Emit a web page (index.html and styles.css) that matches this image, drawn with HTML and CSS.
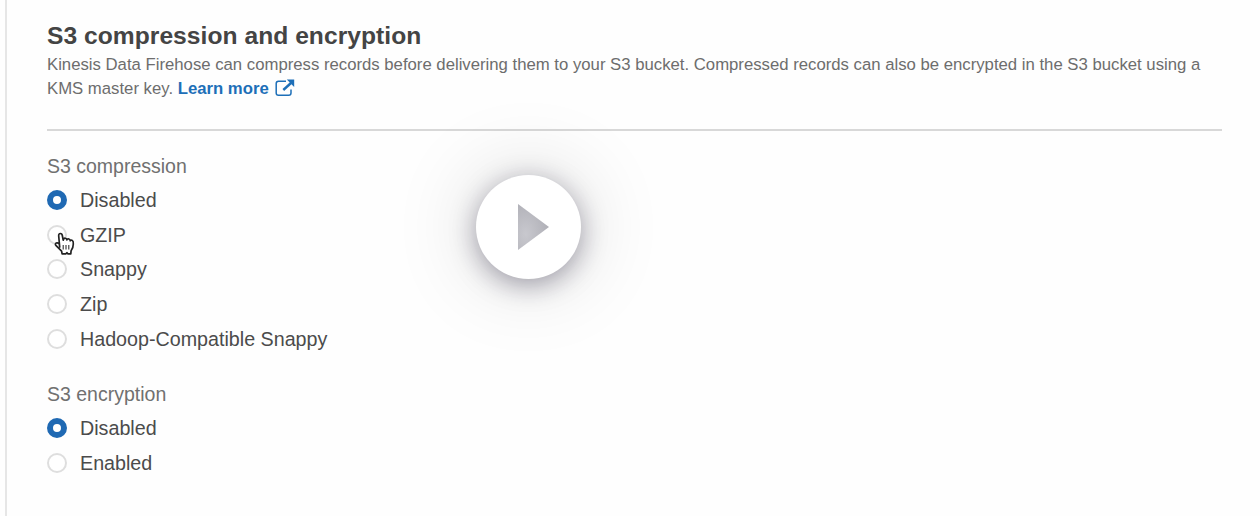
FILE: index.html
```html
<!DOCTYPE html>
<html lang="en">
<head>
<meta charset="utf-8">
<title>S3 compression and encryption</title>
<link rel="stylesheet" href="styles.css">
</head>
<body>
<main class="panel">
  <header class="intro">
    <h1 class="title"><span>S3 compression and encryption</span></h1>
    <p class="description"><span class="line">Kinesis Data Firehose can compress records before delivering them to your S3 bucket. Compressed records can also be encrypted in the S3 bucket using a</span><br><span>KMS master key. </span><a class="link">Learn more</a><svg class="external" viewBox="0 0 20 18" fill="none" stroke="currentColor" stroke-width="1.5"><path d="M11 2.3H3.5Q1.2 2.3 1.2 4.6V14Q1.2 16.3 3.5 16.3H13.7Q16 16.3 16 14V10.5"/><path d="M8.3 11 16 4" stroke-width="2.4"/><path d="M11.8 .5H19.2V7.9Z" fill="currentColor" stroke="none"/></svg></p>
  </header>
  <section class="group">
    <h2 class="label"><span>S3 compression</span></h2>
    <div class="option"><i class="radio checked"></i><span>Disabled</span></div>
    <div class="option"><i class="radio"></i><span>GZIP</span>
      <svg class="cursor" viewBox="0 0 22 24"><path d="M5.7 15 4.7 4Q4.5 1.5 6.4 1.5 8.1 1.5 8.4 4L9.2 8.2Q9.8 5.8 11.5 6.3 12.7 6.6 12.8 8 13.4 6.4 15 7 16.2 7.4 16.2 8.8 17.2 7.6 18.3 8.4 19.5 9 19.3 12 19.3 16 17.1 18.7L16.8 21.8H13.8L13 20.7 11.8 21.8H8.1L7.6 19.2 2.1 13.7Q.7 12 2.1 11.1 3.6 10.2 5.3 12Z" fill="#fff" stroke="#222" stroke-width="1.7" stroke-linejoin="round"/><path d="M9.2 13v4.5M12 13v4.5M14.8 13v4.5" fill="none" stroke="#333" stroke-width="1.1"/></svg>
    </div>
    <div class="option"><i class="radio"></i><span>Snappy</span></div>
    <div class="option"><i class="radio"></i><span>Zip</span></div>
    <div class="option"><i class="radio"></i><span>Hadoop-Compatible Snappy</span></div>
  </section>
  <section class="group">
    <h2 class="label"><span>S3 encryption</span></h2>
    <div class="option"><i class="radio checked"></i><span>Disabled</span></div>
    <div class="option"><i class="radio"></i><span>Enabled</span></div>
  </section>
</main>
<div class="play"><svg class="triangle" viewBox="0 0 31 46"><defs><radialGradient id="shade" cx=".25" cy=".65" r=".75"><stop offset="0" stop-color="#c8c8ce"/><stop offset="1" stop-color="#b0b0b7"/></radialGradient></defs><path d="M0 0 31 23 0 46Z" fill="url(#shade)"/></svg></div>
</body>
</html>
```
FILE: styles.css
```css
* { box-sizing: border-box; }
body {
  margin: 0;
  height: 516px;
  overflow: hidden;
  position: relative;
  background: #fefefe;
  color: #4b4b4b;
  font-family: "Liberation Sans", Arial, sans-serif;
}
.panel {
  height: 516px;
  margin-left: 5px;
  padding: 20px 38px 0 40px;
  border-left: 2px solid #e6e6e6;
}
.intro {
  height: 111px;
  border-bottom: 2px solid #d8d8d8;
}
.title {
  margin: 0;
  font-size: 24.6px;
  line-height: 32px;
  letter-spacing: .04px;
  color: #444;
}
.description {
  margin: 0;
  padding-top: 1px;
  color: #6d6d6d;
  font-size: 16.73px;
  line-height: 24px;
  white-space: nowrap;
}
.link { color: #1d6fb8; font-weight: bold; }
.external {
  width: 20px;
  height: 18px;
  margin-left: 6px;
  vertical-align: -3px;
  color: #1d6fb8;
}
.group { padding-top: 17px; }
.group + .group { padding-top: 20px; }
.label {
  margin: 0;
  padding-top: 2px;
  font-size: 19.5px;
  font-weight: normal;
  line-height: 33px;
  color: #707070;
}
.option {
  display: flex;
  align-items: center;
  gap: 13px;
  height: 34.6px;
  position: relative;
  font-size: 19.7px;
}
.option span { padding-top: 1px; }
.radio {
  width: 20px;
  height: 20px;
  border: 2px solid #dedede;
  border-radius: 50%;
  background: #fff;
}
.checked { border: 6px solid #1f69b3; }
.cursor {
  position: absolute;
  left: 7px;
  top: 14px;
  width: 22px;
  height: 24px;
}
.play {
  position: absolute;
  left: 476px;
  top: 175px;
  width: 105px;
  height: 104px;
  display: grid;
  place-items: center;
  border-radius: 50%;
  background: #fff;
  box-shadow: 0 0 80px 8px rgba(0, 0, 0, .13), 0 6px 26px rgba(20, 15, 45, .36);
}
.triangle { width: 31px; height: 46px; margin-left: 10px; }
```
